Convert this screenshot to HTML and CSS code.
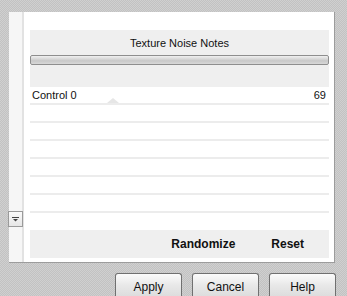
FILE: index.html
```html
<!DOCTYPE html>
<html lang="en">
<head>
  <meta charset="UTF-8" />
  <title>Texture Noise Notes</title>
  <link rel="stylesheet" href="styles.css">
</head>
<body>

<div class="panel">
  <div class="side">
    <div class="drop">
      <svg width="7" height="5" viewBox="0 0 7 5"><rect x="0" y="0" width="7" height="1" fill="#444"/><path d="M1 2 H6 L3.5 4.5 Z" fill="#444"/></svg>
    </div>
  </div>
  <div class="main">
    <div class="title">Texture Noise Notes</div>
    <div class="bar"></div>
    <div class="gap"></div>
    <div class="row first">
      <span>Control 0</span>
      <span class="mark"></span>
      <span class="val">69</span>
    </div>
    <div class="row"></div>
    <div class="row"></div>
    <div class="row"></div>
    <div class="row"></div>
    <div class="row"></div>
    <div class="row"></div>
    <div class="foot">
      <span>Randomize</span>
      <span>Reset</span>
    </div>
  </div>
</div>

<div class="buttons">
  <button>Apply</button>
  <button>Cancel</button>
  <button>Help</button>
</div>

</body>
</html>
```

FILE: styles.css
```css
body {
  margin: 0;
  width: 347px;
  height: 296px;
  overflow: hidden;
  font-family: 'Liberation Sans', Arial, sans-serif;
  background-color: #c8c8c8;
  background-image: repeating-conic-gradient(#c2c2c2 0 25%, #d0d0d0 0 50%);
  background-size: 2px 2px;
}

.panel {
  margin: 12px 0 0 9px;
  width: 325px;
  height: 250px;
  background: #fff;
  border-right: 1px solid #9c9c9c;
  border-bottom: 1px solid #9c9c9c;
  display: flex;
}

.side {
  width: 13px;
  background: #f6f6f6;
  border-right: 2px solid #e2e2e2;
  margin-right: 6px;
  position: relative;
}

.drop {
  position: absolute;
  left: -1px;
  top: 199px;
  width: 13px;
  height: 14px;
  border: 1px solid #9a9a9a;
  background: linear-gradient(#fafafa, #e6e6e6);
  display: flex;
  align-items: center;
  justify-content: center;
}

.main {
  width: 299px;
  padding-top: 18px;
}

.title {
  height: 25px;
  background: #efefef;
  font-size: 11px;
  color: #111;
  text-align: center;
  line-height: 26px;
}

.bar {
  height: 8px;
  border: 1px solid #8e8e8e;
  border-radius: 2px;
  background: linear-gradient(#f0f0f0, #c8c8c8 60%, #d8d8d8);
}

.gap {
  height: 22px;
  background: #efefef;
}

.row {
  height: 16px;
  border-bottom: 2px solid #ececec;
  display: flex;
  align-items: center;
  font-size: 11px;
  color: #111;
  padding: 0 3px 0 2px;
}

.row.first {
  padding-top: 0;
}

.mark {
  width: 0;
  height: 0;
  border-left: 6px solid transparent;
  border-right: 6px solid transparent;
  border-bottom: 5px solid #e6e6e6;
  margin: 11px 0 0 30px;
}

.val {
  margin-left: auto;
}

.foot {
  margin-top: 17px;
  height: 28px;
  background: #efefef;
  display: flex;
  justify-content: flex-end;
  align-items: center;
  gap: 36px;
  padding-right: 25px;
  font-size: 12px;
  font-weight: bold;
  color: #111;
}

.buttons {
  display: flex;
  gap: 10px;
  margin: 10px 0 0 115px;
}

button {
  width: 67px;
  height: 24px;
  border: 1px solid #707070;
  border-bottom: none;
  border-radius: 3px 3px 0 0;
  background: linear-gradient(#fbfbfb, #e8e8e8 50%, #dcdcdc);
  font-family: 'Liberation Sans', Arial, sans-serif;
  font-size: 12px;
  color: #111;
  padding: 3px 0 0;
  text-align: center;
}
```
